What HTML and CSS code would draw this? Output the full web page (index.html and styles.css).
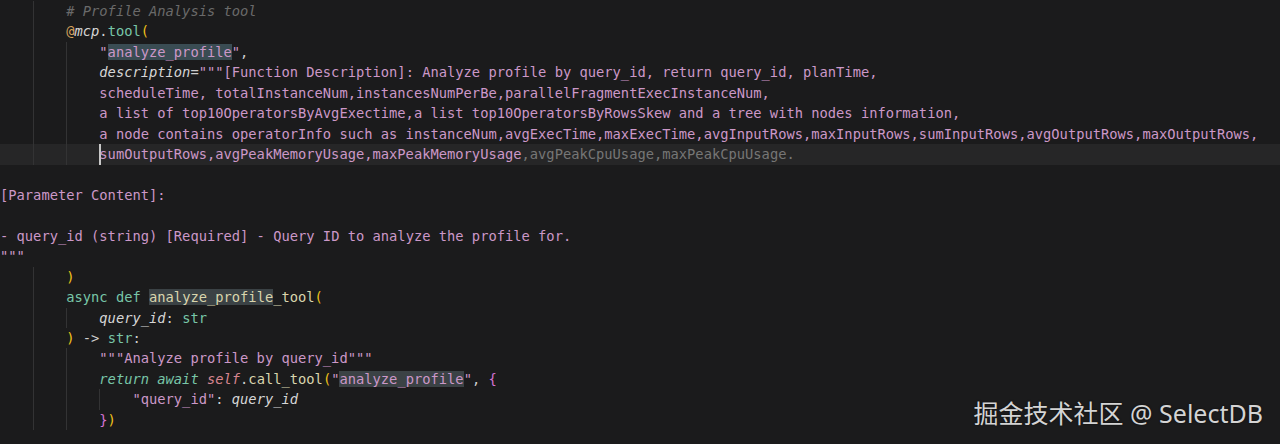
FILE: index.html
```html
<!DOCTYPE html>
<html lang="zh">
<head>
<meta charset="utf-8">
<title>Profile Analysis tool</title>
<link rel="stylesheet" href="styles.css">
</head>
<body>
<main class="editor">
  <div class="code">
    <div class="ln"><span class="ind i0"></span><span class="ind"></span><span class="cm"># Profile Analysis tool</span></div>
    <div class="ln"><span class="ind i0"></span><span class="ind"></span><span class="dec">@</span><span class="it">mcp</span><span class="w">.</span><span class="fn">tool</span><span class="y">(</span></div>
    <div class="ln"><span class="ind i0"></span><span class="ind"></span><span class="ind"></span><span class="s">"<span class="hl">analyze_profile</span>"</span><span class="w">,</span></div>
    <div class="ln"><span class="ind i0"></span><span class="ind"></span><span class="ind"></span><span class="it">description</span><span class="w">=</span><span class="s">"""[Function Description]: Analyze profile by query_id, return query_id, planTime,</span></div>
    <div class="ln"><span class="ind i0"></span><span class="ind"></span><span class="ind"></span><span class="s">scheduleTime, totalInstanceNum,instancesNumPerBe,parallelFragmentExecInstanceNum,</span></div>
    <div class="ln"><span class="ind i0"></span><span class="ind"></span><span class="ind"></span><span class="s">a list of top10OperatorsByAvgExectime,a list top10OperatorsByRowsSkew and a tree with nodes information,</span></div>
    <div class="ln"><span class="ind i0"></span><span class="ind"></span><span class="ind"></span><span class="s">a node contains operatorInfo such as instanceNum,avgExecTime,maxExecTime,avgInputRows,maxInputRows,sumInputRows,avgOutputRows,maxOutputRows,</span></div>
    <div class="ln cur"><span class="ind i0"></span><span class="ind"></span><span class="ind"></span><span class="caret"></span><span class="s">sumOutputRows,avgPeakMemoryUsage,maxPeakMemoryUsage</span><span class="ghost">,avgPeakCpuUsage,maxPeakCpuUsage.</span></div>
    <div class="ln"></div>
    <div class="ln"><span class="s">[Parameter Content]:</span></div>
    <div class="ln"></div>
    <div class="ln"><span class="s">- query_id (string) [Required] - Query ID to analyze the profile for.</span></div>
    <div class="ln"><span class="s">"""</span></div>
    <div class="ln"><span class="ind i0"></span><span class="ind"></span><span class="y">)</span></div>
    <div class="ln"><span class="ind i0"></span><span class="ind"></span><span class="fn">async def </span><span class="fnm"><span class="hl2">analyze_profile</span>_tool</span><span class="y">(</span></div>
    <div class="ln"><span class="ind i0"></span><span class="ind"></span><span class="ind"></span><span class="it">query_id</span><span class="w">: </span><span class="fn">str</span></div>
    <div class="ln"><span class="ind i0"></span><span class="ind"></span><span class="y">)</span><span class="w"> -&gt; </span><span class="fn">str</span><span class="w">:</span></div>
    <div class="ln"><span class="ind i0"></span><span class="ind"></span><span class="ind"></span><span class="s">"""Analyze profile by query_id"""</span></div>
    <div class="ln"><span class="ind i0"></span><span class="ind"></span><span class="ind"></span><span class="fn it2">return await </span><span class="self">self</span><span class="w">.</span><span class="fnm">call_tool</span><span class="y">(</span><span class="s">"<span class="hl2">analyze_profile</span>"</span><span class="w">, </span><span class="mg">{</span></div>
    <div class="ln"><span class="ind i0"></span><span class="ind"></span><span class="ind"></span><span class="ind"></span><span class="s">"query_id"</span><span class="w">: </span><span class="it">query_id</span></div>
    <div class="ln"><span class="ind i0"></span><span class="ind"></span><span class="ind"></span><span class="mg">}</span><span class="y">)</span></div>
  </div>
  <div class="watermark">掘金技术社区 @ SelectDB</div>
</main>
</body>
</html>
```
FILE: styles.css
```css
html, body {
  margin: 0;
  padding: 0;
  background: #1b1b1c;
}
.editor {
  position: relative;
  width: 1280px;
  height: 444px;
  overflow: hidden;
  background: #1b1b1c;
}
.code {
  display: flex;
  flex-direction: column;
  padding-top: 1px;
  font-family: "DejaVu Sans Mono", "Liberation Mono", monospace;
  font-size: 13.75px;
  color: #cfcfcf;
}
.ln {
  height: 20.45px;
  line-height: 20.45px;
  white-space: pre;
  display: flex;
  align-items: stretch;
}
.ln > span { white-space: pre; }
.cur { background: #262627; }
.ind {
  display: inline-block;
  box-sizing: border-box;
  width: 4ch;
  flex: none;
  border-left: 1px solid #333334;
}
.ind.i0 { border-left-color: transparent; }
.caret {
  display: inline-block;
  width: 0;
  border-left: 2px solid #c8c8c8;
  margin-right: -2px;
}
.cm { color: #6a6a6a; font-style: italic; }
.dec { color: #d7a25c; }
.it { color: #d6d6d6; font-style: italic; }
.it2 { font-style: italic; }
.w { color: #cfcfcf; }
.fn { color: #78c6a8; }
.fnm { color: #d9d5ad; }
.y { color: #f0c21a; }
.s { color: #cc98c8; }
.hl { background: #3a4c53; }
.hl2 { background: #3b4245; }
.ghost { color: #767676; }
.self { color: #d6848f; font-style: italic; }
.mg { color: #d472d3; }
.watermark {
  position: absolute;
  right: 17px;
  bottom: 16px;
  font-family: "Noto Sans", "Noto Sans CJK SC", sans-serif;
  font-size: 25px;
  line-height: 30px;
  color: #d4d4d4;
  text-shadow: 0 0 2px rgba(0, 0, 0, 0.6);
}
```
